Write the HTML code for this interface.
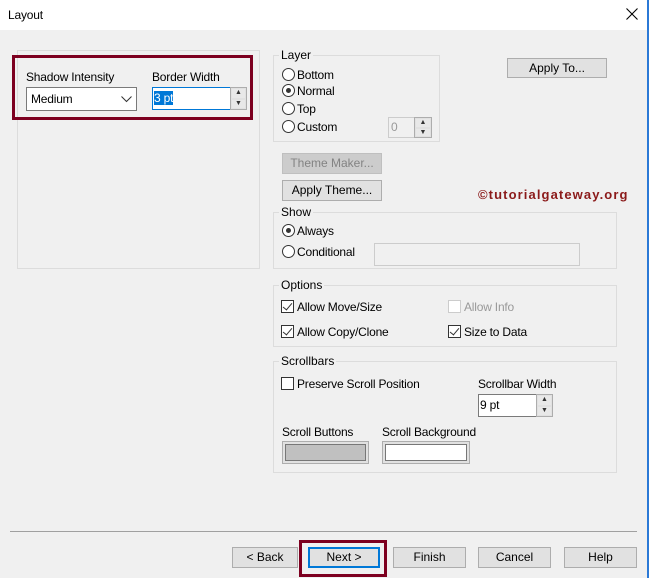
<!DOCTYPE html>
<html><head><style>
*{box-sizing:border-box;margin:0;padding:0}
body{width:649px;height:578px;background:#f0f0f0;position:relative;overflow:hidden;font-family:"Liberation Sans",sans-serif;font-size:12px;color:#000}
.a{position:absolute}
.t{position:absolute;white-space:nowrap;line-height:14px;letter-spacing:-0.2px}
.g{position:absolute;border:1px solid #dcdcdc}
.gl{position:absolute;background:#f0f0f0;padding:0 2px;line-height:14px}
.btn{position:absolute;background:#e1e1e1;border:1px solid #adadad;text-align:center;line-height:18px}
.rad{position:absolute;width:13px;height:13px;border:1px solid #333;border-radius:50%;background:#fff}
.rad.on::after{content:"";position:absolute;left:3px;top:3px;width:5px;height:5px;border-radius:50%;background:#333}
.cb{position:absolute;width:13px;height:13px;border:1px solid #333;background:#fff}
.cb.on::after{content:"";position:absolute;left:3px;top:0px;width:4px;height:8px;border:solid #333;border-width:0 1px 1px 0;transform:rotate(40deg)}
.ed{position:absolute;background:#fff;border:1px solid #7a7a7a}
.sp{position:absolute;border:1px solid #adadad;background:#f0f0f0}
.sp div{height:50%;border:1px solid #e1e1e1;background:#e8e8e8;font-size:7px;line-height:8px;text-align:center;color:#333}
</style></head><body>
<div class="a" style="left:0;top:0;width:649px;height:30px;background:#fff"></div>
<div class="a" style="right:0;top:0;width:2px;height:578px;background:#2b79d6"></div>
<div class="t" style="left:8px;top:8px;font-size:12px">Layout</div>
<svg class="a" style="left:626px;top:8px" width="12" height="12"><path d="M0.5 0.5L11.5 11.5M11.5 0.5L0.5 11.5" stroke="#000" stroke-width="1.1"/></svg>

<div class="g" style="left:17px;top:50px;width:243px;height:219px"></div>
<div class="a" style="left:12px;top:55px;width:241px;height:65px;border:3px solid #7d0020"></div>
<div class="t" style="left:26px;top:70px">Shadow Intensity</div>
<div class="ed" style="left:26px;top:87px;width:111px;height:24px;border-color:#7a7a7a"></div>
<div class="t" style="left:31px;top:92px">Medium</div>
<svg class="a" style="left:121px;top:96px" width="11" height="7"><path d="M0.5 0.5L5.5 5.5L10.5 0.5" stroke="#333" fill="none"/></svg>
<div class="t" style="left:152px;top:70px">Border Width</div>
<div class="ed" style="left:152px;top:87px;width:79px;height:23px;border-color:#0078d7"></div>
<div class="t" style="left:154px;top:91px;background:#0078d7;color:#fff">3 pt</div>
<div class="sp" style="left:230px;top:87px;width:17px;height:23px"><div>▲</div><div>▼</div></div>

<div class="g" style="left:273px;top:55px;width:167px;height:87px"></div>
<div class="gl" style="left:279px;top:48px">Layer</div>
<div class="rad" style="left:282px;top:68px"></div><div class="t" style="left:297px;top:68px">Bottom</div>
<div class="rad on" style="left:282px;top:84px"></div><div class="t" style="left:297px;top:84px">Normal</div>
<div class="rad" style="left:282px;top:102px"></div><div class="t" style="left:297px;top:102px">Top</div>
<div class="rad" style="left:282px;top:120px"></div><div class="t" style="left:297px;top:120px">Custom</div>
<div class="a" style="left:388px;top:117px;width:44px;height:21px;border:1px solid #ccc"></div>
<div class="t" style="left:391px;top:120px;color:#999">0</div>
<div class="sp" style="left:414px;top:117px;width:18px;height:21px"><div>▲</div><div>▼</div></div>

<div class="btn" style="left:507px;top:58px;width:100px;height:20px">Apply To...</div>
<div class="btn" style="left:282px;top:153px;width:100px;height:21px;background:#ccc;border-color:#bfbfbf;color:#838383">Theme Maker...</div>
<div class="btn" style="left:282px;top:180px;width:100px;height:21px">Apply Theme...</div>
<div class="t" style="left:478px;top:188px;font-size:13px;font-weight:bold;color:#8b1a1a;letter-spacing:1.1px">©tutorialgateway.org</div>

<div class="g" style="left:273px;top:212px;width:344px;height:57px"></div>
<div class="gl" style="left:279px;top:205px">Show</div>
<div class="rad on" style="left:282px;top:224px"></div><div class="t" style="left:297px;top:224px">Always</div>
<div class="rad" style="left:282px;top:245px"></div><div class="t" style="left:297px;top:245px">Conditional</div>
<div class="a" style="left:374px;top:243px;width:206px;height:23px;border:1px solid #ccc"></div>

<div class="g" style="left:273px;top:285px;width:344px;height:62px"></div>
<div class="gl" style="left:279px;top:278px">Options</div>
<div class="cb on" style="left:281px;top:300px"></div><div class="t" style="left:297px;top:300px">Allow Move/Size</div>
<div class="cb" style="left:448px;top:300px;border-color:#ccc"></div><div class="t" style="left:464px;top:300px;color:#999">Allow Info</div>
<div class="cb on" style="left:281px;top:325px"></div><div class="t" style="left:297px;top:325px">Allow Copy/Clone</div>
<div class="cb on" style="left:448px;top:325px"></div><div class="t" style="left:464px;top:325px">Size to Data</div>

<div class="g" style="left:273px;top:361px;width:344px;height:112px"></div>
<div class="gl" style="left:279px;top:354px">Scrollbars</div>
<div class="cb" style="left:281px;top:377px"></div><div class="t" style="left:297px;top:377px">Preserve Scroll Position</div>
<div class="t" style="left:478px;top:377px">Scrollbar Width</div>
<div class="ed" style="left:478px;top:394px;width:59px;height:23px"></div>
<div class="t" style="left:480px;top:398px">9 pt</div>
<div class="sp" style="left:536px;top:394px;width:17px;height:23px"><div>▲</div><div>▼</div></div>
<div class="t" style="left:282px;top:425px">Scroll Buttons</div>
<div class="a" style="left:282px;top:441px;width:87px;height:23px;border:1px solid #adadad;background:#e1e1e1;padding:2px"><div style="width:100%;height:100%;background:#c0c0c0;border:1px solid #777"></div></div>
<div class="t" style="left:382px;top:425px">Scroll Background</div>
<div class="a" style="left:382px;top:441px;width:88px;height:23px;border:1px solid #adadad;background:#e1e1e1;padding:2px"><div style="width:100%;height:100%;background:#fff;border:1px solid #777"></div></div>

<div class="a" style="left:10px;top:531px;width:627px;height:1px;background:#a0a0a0"></div>
<div class="btn" style="left:232px;top:547px;width:66px;height:21px">&lt; Back</div>
<div class="a" style="left:299px;top:540px;width:88px;height:37px;border:3px solid #7d0020"></div>
<div class="btn" style="left:308px;top:547px;width:72px;height:21px;border:2px solid #0078d7;line-height:17px">Next &gt;</div>
<div class="btn" style="left:393px;top:547px;width:73px;height:21px">Finish</div>
<div class="btn" style="left:478px;top:547px;width:73px;height:21px">Cancel</div>
<div class="btn" style="left:564px;top:547px;width:73px;height:21px">Help</div>
</body></html>
